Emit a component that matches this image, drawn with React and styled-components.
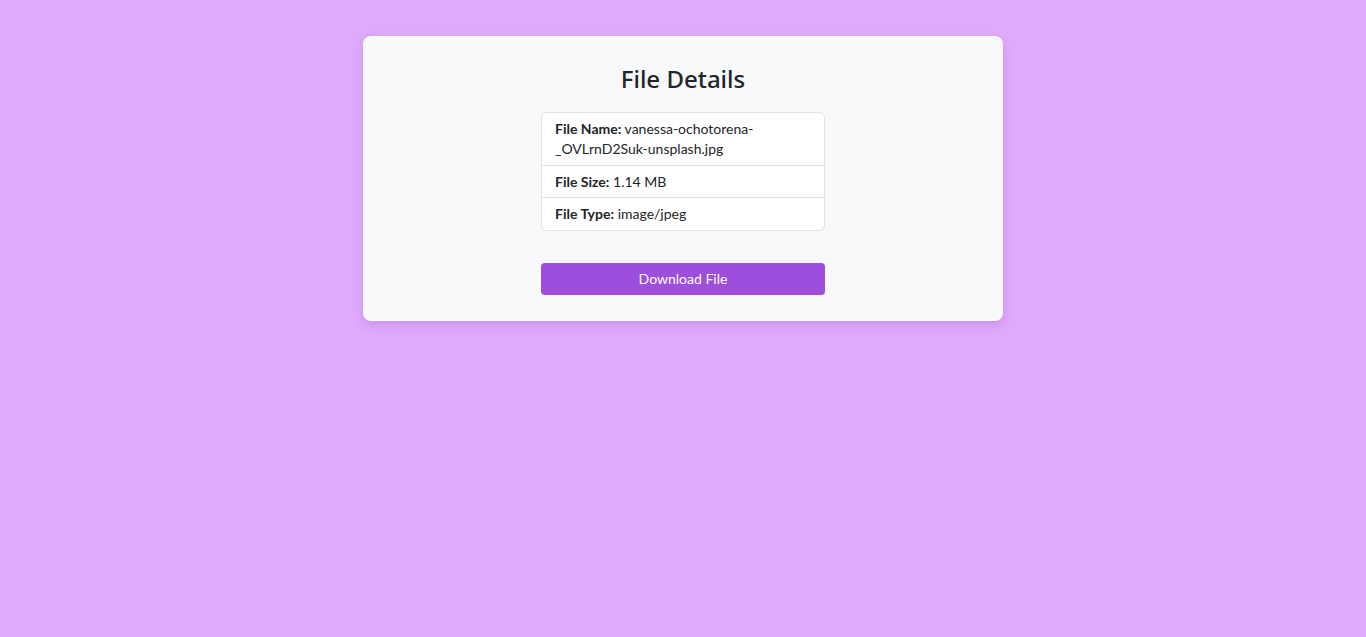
import React from "react";
import styled, { createGlobalStyle } from "styled-components";

const GlobalStyle = createGlobalStyle`
  html, body {
    margin: 0;
    padding: 0;
    background: #dfa9fc;
    font-family: "Noto Sans", "Open Sans", sans-serif;
    color: #212529;
  }
`;

const App = () => {
  const file = {
    size: "1.14 MB",
    type: "image/jpeg",
  };

  return (
    <Page>
      <GlobalStyle />
      <Card>
        <Title>File Details</Title>
        <Column>
          <List>
            <Item>
              <strong>File Name:</strong> vanessa-ochotorena-<wbr />_OVLrnD2Suk-unsplash.jpg
            </Item>
            <Item>
              <strong>File Size:</strong> {file.size}
            </Item>
            <Item>
              <strong>File Type:</strong> {file.type}
            </Item>
          </List>
          <Button>Download File</Button>
        </Column>
      </Card>
    </Page>
  );
};

export default App;

const Page = styled.div`
  min-height: 100vh;
  display: flex;
  justify-content: center;
  align-items: flex-start;
  padding-top: 36px;
  box-sizing: border-box;
`;

const Card = styled.div`
  width: 640px;
  box-sizing: border-box;
  background: #f8f9fa;
  border-radius: 8px;
  padding: 27px 24px 26px;
  box-shadow: 0 4px 10px rgba(120, 40, 160, 0.18);
  display: flex;
  flex-direction: column;
  align-items: center;
`;

const Title = styled.h2`
  margin: 0 0 18px;
  font-size: 24px;
  font-weight: 500;
  line-height: 1.3;
  text-align: center;
`;

const Column = styled.div`
  width: 284px;
  display: flex;
  flex-direction: column;
`;

const List = styled.ul`
  list-style: none;
  margin: 0 0 32px;
  padding: 0;
  background: #fff;
  border: 1px solid #dee2e6;
  border-radius: 6px;
  font-family: Lato, "Noto Sans", sans-serif;
`;

const Item = styled.li`
  padding: 6px 13px 5.6px;
  font-size: 14px;
  line-height: 20px;
  & + & {
    border-top: 1px solid #dee2e6;
  }
  strong {
    font-weight: 700;
  }
`;

const Button = styled.button`
  height: 32px;
  border: none;
  border-radius: 4px;
  background: #9d4edd;
  color: #fff;
  font-family: Lato, "Noto Sans", sans-serif;
  font-size: 14px;
  cursor: pointer;
`;
